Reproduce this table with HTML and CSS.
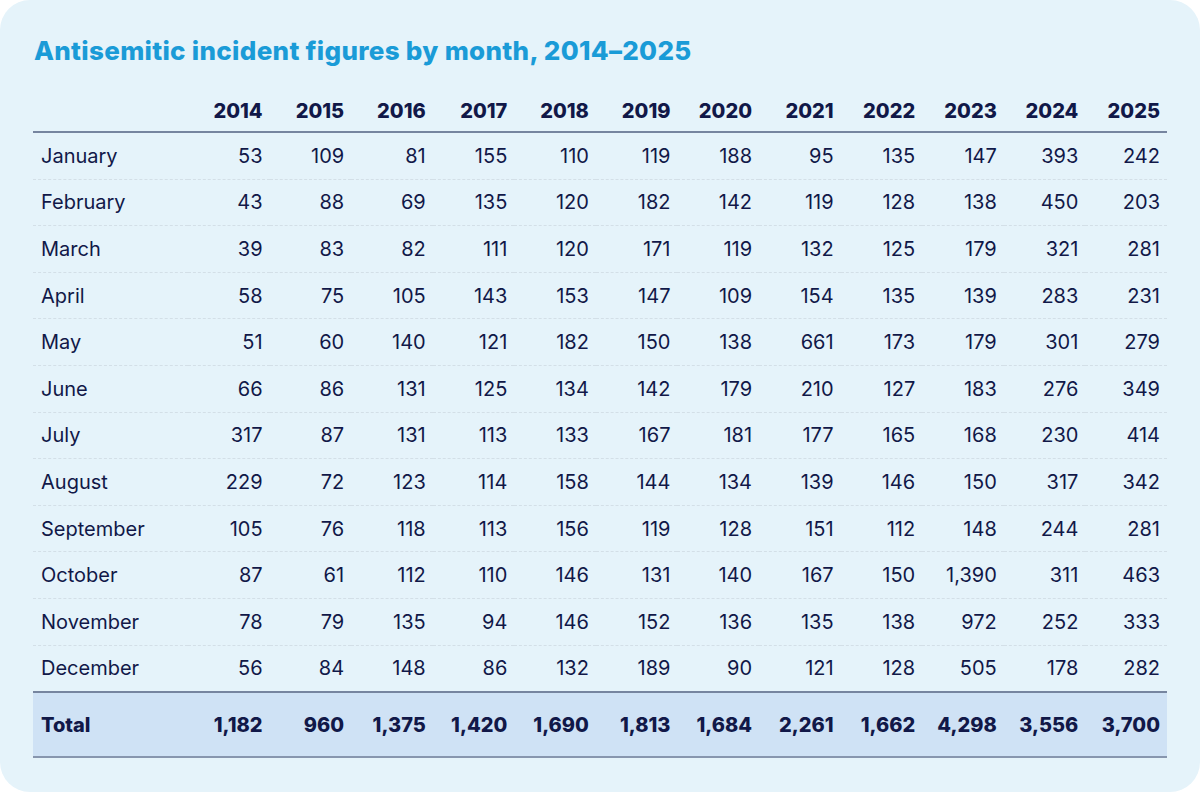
FILE: index.html
```html
<!DOCTYPE html>
<html lang="en">
<head>
<meta charset="utf-8">
<title>Antisemitic incident figures by month, 2014–2025</title>
<link rel="stylesheet" href="styles.css">
</head>
<body>
<div class="card">
  <h1 class="title">Antisemitic incident figures by month, 2014–2025</h1>
  <table class="data">
    <colgroup><col class="col-label"><col span="12"></colgroup>
    <thead>
      <tr><th class="label"></th><th>2014</th><th>2015</th><th>2016</th><th>2017</th><th>2018</th><th>2019</th><th>2020</th><th>2021</th><th>2022</th><th>2023</th><th>2024</th><th>2025</th></tr>
    </thead>
    <tbody>
      <tr><td class="label">January</td><td>53</td><td>109</td><td>81</td><td>155</td><td>110</td><td>119</td><td>188</td><td>95</td><td>135</td><td>147</td><td>393</td><td>242</td></tr>
      <tr><td class="label">February</td><td>43</td><td>88</td><td>69</td><td>135</td><td>120</td><td>182</td><td>142</td><td>119</td><td>128</td><td>138</td><td>450</td><td>203</td></tr>
      <tr><td class="label">March</td><td>39</td><td>83</td><td>82</td><td>111</td><td>120</td><td>171</td><td>119</td><td>132</td><td>125</td><td>179</td><td>321</td><td>281</td></tr>
      <tr><td class="label">April</td><td>58</td><td>75</td><td>105</td><td>143</td><td>153</td><td>147</td><td>109</td><td>154</td><td>135</td><td>139</td><td>283</td><td>231</td></tr>
      <tr><td class="label">May</td><td>51</td><td>60</td><td>140</td><td>121</td><td>182</td><td>150</td><td>138</td><td>661</td><td>173</td><td>179</td><td>301</td><td>279</td></tr>
      <tr><td class="label">June</td><td>66</td><td>86</td><td>131</td><td>125</td><td>134</td><td>142</td><td>179</td><td>210</td><td>127</td><td>183</td><td>276</td><td>349</td></tr>
      <tr><td class="label">July</td><td>317</td><td>87</td><td>131</td><td>113</td><td>133</td><td>167</td><td>181</td><td>177</td><td>165</td><td>168</td><td>230</td><td>414</td></tr>
      <tr><td class="label">August</td><td>229</td><td>72</td><td>123</td><td>114</td><td>158</td><td>144</td><td>134</td><td>139</td><td>146</td><td>150</td><td>317</td><td>342</td></tr>
      <tr><td class="label">September</td><td>105</td><td>76</td><td>118</td><td>113</td><td>156</td><td>119</td><td>128</td><td>151</td><td>112</td><td>148</td><td>244</td><td>281</td></tr>
      <tr><td class="label">October</td><td>87</td><td>61</td><td>112</td><td>110</td><td>146</td><td>131</td><td>140</td><td>167</td><td>150</td><td>1,390</td><td>311</td><td>463</td></tr>
      <tr><td class="label">November</td><td>78</td><td>79</td><td>135</td><td>94</td><td>146</td><td>152</td><td>136</td><td>135</td><td>138</td><td>972</td><td>252</td><td>333</td></tr>
      <tr><td class="label">December</td><td>56</td><td>84</td><td>148</td><td>86</td><td>132</td><td>189</td><td>90</td><td>121</td><td>128</td><td>505</td><td>178</td><td>282</td></tr>
    </tbody>
    <tfoot>
      <tr><th class="label">Total</th><td>1,182</td><td>960</td><td>1,375</td><td>1,420</td><td>1,690</td><td>1,813</td><td>1,684</td><td>2,261</td><td>1,662</td><td>4,298</td><td>3,556</td><td>3,700</td></tr>
    </tfoot>
  </table>
</div>
</body>
</html>
```
FILE: styles.css
```css
html, body {
  margin: 0;
  padding: 0;
  background: #ffffff;
}

body {
  font-family: Inter, "Noto Sans", sans-serif;
  color: #111848;
}

.card {
  box-sizing: border-box;
  width: 1200px;
  height: 792px;
  background: #e5f3fa;
  border-radius: 30px;
  padding: 36px 33px 0 33px;
}

.title {
  margin: 0 0 25px 1px;
  font-size: 26px;
  line-height: 30px;
  font-weight: 800;
  color: #1a9bd7;
  letter-spacing: 0.3px;
}

.data {
  width: 1134px;
  border-collapse: collapse;
  table-layout: fixed;
  font-size: 20px;
  line-height: 24px;
}

.col-label {
  width: 155px;
}

.data th,
.data td {
  padding: 0 7px 0 0;
  text-align: right;
  font-weight: 400;
  white-space: nowrap;
}

.data .label {
  text-align: left;
  padding-left: 8px;
}

.data thead th {
  font-weight: 800;
  padding-top: 8px;
  padding-bottom: 8px;
  border-bottom: 2px solid #76859f;
}

.data tbody td {
  height: 45.6px;
  vertical-align: middle;
  border-bottom: 1px dashed #d3dfe7;
}

.data tbody tr:last-child td {
  border-bottom: none;
}

.data tfoot tr {
  background: #cfe2f5;
}

.data tfoot th,
.data tfoot td {
  height: 63px;
  font-weight: 800;
  border-top: 2px solid #76859f;
  border-bottom: 2px solid #8796ae;
}
```
